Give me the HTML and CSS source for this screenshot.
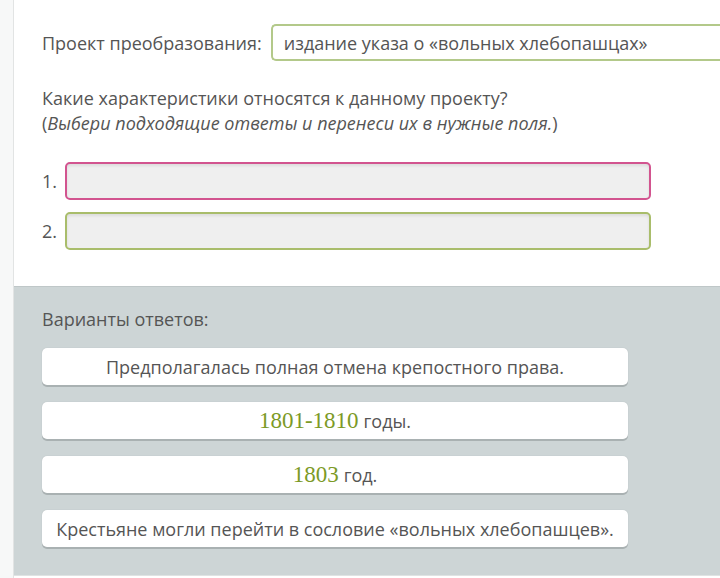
FILE: index.html
```html
<!DOCTYPE html>
<html lang="ru">
<head>
    <meta charset="UTF-8">
    <meta name="viewport" content="width=device-width, initial-scale=1.0">
    <title>Проект преобразования</title>
    <link rel="stylesheet" href="styles.css">
</head>
<body>
    <div class="page">
        <aside class="gutter"></aside>

        <main class="task">
            <section class="task-body">
                <div class="project-row">
                    <span class="project-label">Проект преобразования:</span>
                    <div class="project-value">издание указа о «вольных хлебопашцах»</div>
                </div>

                <p class="question">
                    Какие характеристики относятся к данному проекту?<br>
                    (<em>Выбери подходящие ответы и перенеси их в нужные поля.</em>)
                </p>

                <ol class="drop-list">
                    <li class="drop-row">
                        <span class="drop-num">1.</span>
                        <div class="drop-slot slot-wrong"></div>
                    </li>
                    <li class="drop-row">
                        <span class="drop-num">2.</span>
                        <div class="drop-slot slot-right"></div>
                    </li>
                </ol>
            </section>

            <section class="answers">
                <div class="answers-title">Варианты ответов:</div>
                <div class="answer-list">
                    <div class="answer">Предполагалась полная отмена крепостного права.</div>
                    <div class="answer"><span class="num">1801-1810</span> годы.</div>
                    <div class="answer"><span class="num">1803</span> год.</div>
                    <div class="answer">Крестьяне могли перейти в сословие «вольных хлебопашцев».</div>
                </div>
            </section>
        </main>
    </div>
</body>
</html>
```

FILE: styles.css
```css
* {
    margin: 0;
    padding: 0;
    box-sizing: border-box;
}

body {
    font-family: 'Open Sans', 'Noto Sans', sans-serif;
    font-size: 18px;
    color: #555;
    background: #fff;
}

.page {
    display: flex;
    min-height: 578px;
}

.gutter {
    width: 14px;
    flex-shrink: 0;
    background: #f7f8f8;
    border-right: 1px solid #e2e4e4;
}

.task {
    flex: 1;
    min-width: 0;
}

.task-body {
    padding: 24px 0 36px 28px;
    background: #fff;
}

.project-row {
    display: flex;
    align-items: center;
    gap: 9px;
}

.project-value {
    flex: 1;
    height: 37px;
    padding: 0 11px;
    display: flex;
    align-items: center;
    white-space: nowrap;
    border: 2px solid #b3c98a;
    border-right: none;
    border-radius: 5px 0 0 5px;
}

.question {
    margin-top: 25px;
    line-height: 25px;
}

.question em {
    font-style: italic;
}

.drop-list {
    list-style: none;
    margin-top: 26px;
    display: flex;
    flex-direction: column;
    gap: 12px;
}

.drop-row {
    display: flex;
    align-items: center;
    gap: 7px;
}

.drop-num {
    width: 16px;
}

.drop-slot {
    width: 586px;
    height: 38px;
    background: #efefef;
    border-radius: 5px;
    box-shadow: inset 0 2px 3px rgba(0, 0, 0, 0.08);
}

.slot-wrong {
    border: 2px solid #d2548f;
}

.slot-right {
    border: 2px solid #a9bd6b;
}

.answers {
    background: #cdd5d6;
    padding: 21px 0 28px 28px;
    border-top: 1px solid #bfc7c8;
    border-bottom: 1px solid #dfe3e3;
    min-height: 290px;
}

.answers-title {
    line-height: 22px;
}

.answer-list {
    margin-top: 18px;
    display: flex;
    flex-direction: column;
    gap: 17px;
    width: 586px;
}

.answer {
    height: 37px;
    background: #fff;
    border-radius: 5px;
    box-shadow: 0 2px 0 #a9b1b2, 0 0 1px #a9b1b2;
    display: flex;
    align-items: center;
    justify-content: center;
    white-space: nowrap;
}

.num {
    font-family: 'Liberation Serif', 'DejaVu Serif', serif;
    font-size: 23px;
    color: #7c9a26;
    margin-right: 5px;
}
```
